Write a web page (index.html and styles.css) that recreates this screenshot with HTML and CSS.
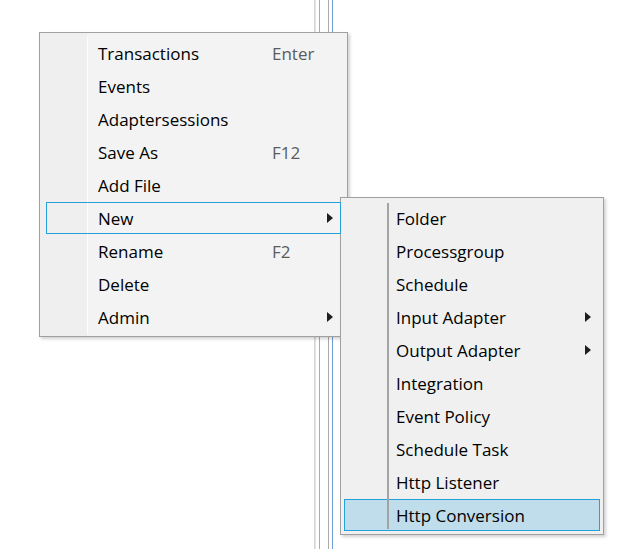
FILE: index.html
```html
<!DOCTYPE html>
<html>
<head>
<meta charset="utf-8">
<link rel="stylesheet" href="styles.css">
</head>
<body>
<div class="splitter">
  <div class="ln ln-a"></div>
  <div class="ln ln-b"></div>
  <div class="ln ln-c"></div>
  <div class="ln ln-d"></div>
  <div class="ln ln-e"></div>
</div>

<div class="menu main-menu">
  <div class="sep"></div>
  <div class="item"><span class="label">Transactions</span><span class="key">Enter</span></div>
  <div class="item"><span class="label">Events</span></div>
  <div class="item"><span class="label">Adaptersessions</span></div>
  <div class="item"><span class="label">Save As</span><span class="key">F12</span></div>
  <div class="item"><span class="label">Add File</span></div>
  <div class="item open"><span class="label">New</span><span class="arrow"></span></div>
  <div class="item"><span class="label">Rename</span><span class="key">F2</span></div>
  <div class="item"><span class="label">Delete</span></div>
  <div class="item"><span class="label">Admin</span><span class="arrow"></span></div>
</div>

<div class="menu sub-menu">
  <div class="sep"></div>
  <div class="item"><span class="label">Folder</span></div>
  <div class="item"><span class="label">Processgroup</span></div>
  <div class="item"><span class="label">Schedule</span></div>
  <div class="item"><span class="label">Input Adapter</span><span class="arrow"></span></div>
  <div class="item"><span class="label">Output Adapter</span><span class="arrow"></span></div>
  <div class="item"><span class="label">Integration</span></div>
  <div class="item"><span class="label">Event Policy</span></div>
  <div class="item"><span class="label">Schedule Task</span></div>
  <div class="item"><span class="label">Http Listener</span></div>
  <div class="item hover"><span class="label">Http Conversion</span></div>
</div>
</body>
</html>
```

FILE: styles.css
```css
html, body {
  margin: 0;
  padding: 0;
  background: #ffffff;
  width: 623px;
  height: 549px;
  overflow: hidden;
  font-family: "Open Sans", "Noto Sans", sans-serif;
}

.splitter {
  display: flex;
  height: 549px;
  margin-left: 314px;
}

.ln { width: 1px; height: 100%; flex: none; }
.ln-a { background: #d4d4d4; }
.ln-b { background: #e6e6e6; margin-right: 3px; }
.ln-c { background: #ababab; margin-right: 8px; }
.ln-d { background: #ababab; margin-right: 3px; }
.ln-e { background: #6f9fd6; }

.menu {
  position: absolute;
  box-sizing: border-box;
  border: 1px solid #a0a0a0;
  box-shadow: 2px 2px 3px rgba(0, 0, 0, 0.18);
  display: flex;
  flex-direction: column;
}

.main-menu {
  left: 39px;
  top: 32px;
  width: 309px;
  height: 305px;
  padding: 4px 0 2px;
  background: linear-gradient(to right, #efefef 0, #efefef 47px, #f3f3f3 47px);
}

.sub-menu {
  left: 340px;
  top: 197px;
  width: 264px;
  height: 338px;
  padding: 4px 0 2px;
  background: #f0f0f0;
}

.sep {
  position: absolute;
  top: 4px;
  bottom: 2px;
}

.main-menu .sep {
  left: 47px;
  width: 1px;
  background: #fdfdfd;
}

.sub-menu .sep {
  left: 46px;
  width: 2px;
  top: 5px;
  bottom: 5px;
  background: #a3a3a3;
  z-index: 2;
}

.item {
  position: relative;
  z-index: 1;
  box-sizing: border-box;
  height: 32px;
  margin-bottom: 1px;
  border: 1px solid transparent;
  display: flex;
  align-items: center;
  padding-left: 51px;
  font-size: 17px;
  color: #000000;
  white-space: nowrap;
}

.main-menu .item { margin-left: 6px; margin-right: 6px; }
.sub-menu .item { margin-left: 3px; margin-right: 3px; }

.label { width: 174px; flex: none; }
.key { color: #5c5c5c; }

.arrow {
  margin-left: auto;
  width: 0;
  height: 0;
  border-left: 6px solid #1e1e1e;
  border-top: 5px solid transparent;
  border-bottom: 5px solid transparent;
}

.main-menu .arrow { margin-right: 7px; }
.sub-menu .arrow { margin-right: 8px; }

.item.open { border-color: #26a0da; }
.item.hover { border-color: #26a0da; background: #c0ddeb; z-index: 1; }
```
